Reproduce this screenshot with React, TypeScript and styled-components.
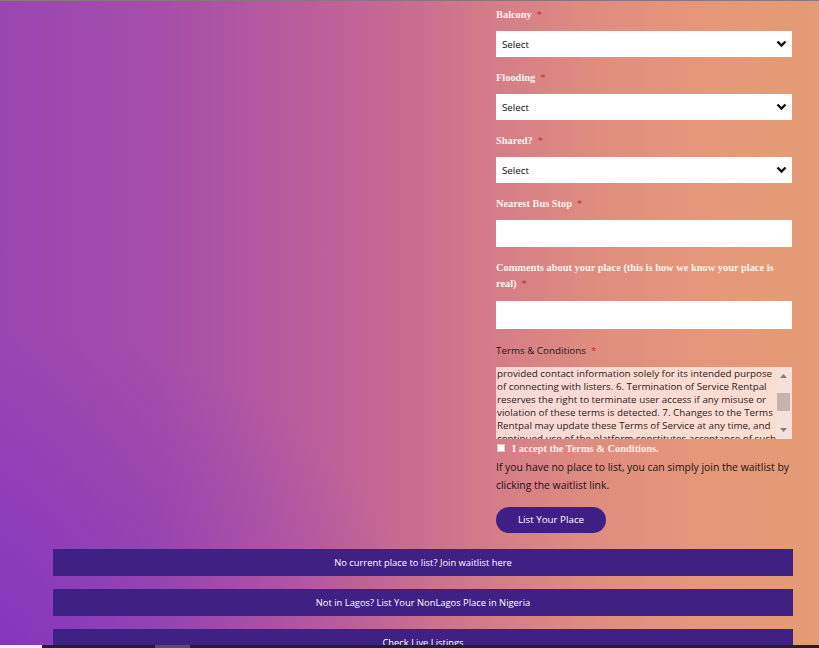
import React from "react";
import styled, { createGlobalStyle } from "styled-components";

const Global = createGlobalStyle`
  html, body { margin: 0; padding: 0; overflow: hidden; }
  body { font-family: "Open Sans", "Noto Sans", sans-serif; }
  * { box-sizing: border-box; }
`;

const Page = styled.div`
  width: 819px;
  height: 648px;
  display: flex;
  flex-direction: column;
  overflow: hidden;
  border-top: 1px solid #8c7480;
  background:
    radial-gradient(ellipse 420px 320px at 0% 100%, rgba(110, 40, 200, 0.5) 0%, rgba(110, 40, 200, 0) 100%),
    linear-gradient(90deg, #9a46b2 0%, #a64ea8 20%, #bc5e9c 38%, #c86c90 50%, #d47c88 60%, #df8c80 72%, #e6977a 86%, #e49c74 100%);
`;

const Main = styled.div`
  flex: 1;
  overflow: hidden;
  display: flex;
  flex-direction: column;
`;

const FormColumn = styled.form`
  margin-left: 496px;
  width: 296px;
  padding-top: 6px;
  display: flex;
  flex-direction: column;
`;

const Field = styled.div<{ $mb?: number }>`
  display: flex;
  flex-direction: column;
  margin-bottom: ${(p) => p.$mb ?? 13}px;
`;

const Label = styled.label<{ $dark?: boolean; $mb?: number }>`
  display: block;
  font-family: ${(p) => (p.$dark ? `"Open Sans", sans-serif` : `"Liberation Serif", serif`)};
  font-weight: ${(p) => (p.$dark ? 400 : 700)};
  font-size: ${(p) => (p.$dark ? "9.8px" : "10.4px")};
  line-height: 16px;
  color: ${(p) => (p.$dark ? "#1e1416" : "#fdf1ee")};
  margin-bottom: ${(p) => p.$mb ?? 8}px;
`;

const Req = styled.span`
  color: #c0302e;
  margin-left: 5px;
  font-weight: 400;
  line-height: 1;
`;

const SelectWrap = styled.div`
  position: relative;
  height: 26px;
  background: #ffffff;
  display: flex;
  align-items: center;
`;

const SelectBox = styled.select`
  appearance: none;
  -webkit-appearance: none;
  border: none;
  outline: none;
  background: transparent;
  width: 100%;
  height: 100%;
  padding: 0 24px 0 6px;
  font-family: "Open Sans", sans-serif;
  font-size: 9.8px;
  color: #0c0c0c;
`;

const Chevron = styled.svg`
  position: absolute;
  right: 5px;
  top: 8px;
  pointer-events: none;
`;

const TextInput = styled.input<{ $h: number }>`
  height: ${(p) => p.$h}px;
  border: none;
  outline: none;
  background: #ffffff;
  padding: 0 6px;
  font-family: "Open Sans", sans-serif;
  font-size: 10px;
`;

const TermsBox = styled.div`
  height: 72px;
  display: flex;
  background: rgba(255, 236, 228, 0.82);
`;

const TermsText = styled.div`
  flex: 1;
  overflow: hidden;
  padding: 0 0 0 1px;
  font-family: "Open Sans", sans-serif;
  font-size: 9.8px;
  line-height: 13px;
  color: #2a2020;
`;

const TermsLine = styled.div`
  white-space: nowrap;
`;

const ScrollTrack = styled.div`
  width: 16px;
  padding: 2px 2px 2px 1px;
  display: flex;
  flex-direction: column;
  align-items: center;
  background: rgba(245, 225, 218, 0.9);
`;

const ScrollArrow = styled.svg`
  flex: none;
  margin: 5px 0;
`;

const ScrollSpace = styled.div<{ $grow: number }>`
  flex: ${(p) => p.$grow};
`;

const ScrollThumb = styled.div`
  width: 13px;
  height: 18px;
  background: #c9b2aa;
`;

const AcceptRow = styled.label`
  display: flex;
  align-items: center;
  height: 18px;
  gap: 7px;
  font-family: "Liberation Serif", serif;
  font-weight: 700;
  font-size: 10.4px;
  color: #fdeee8;
`;

const Check = styled.span`
  width: 8px;
  height: 8px;
  margin-left: 1px;
  background: #ffffff;
  border: 1px solid #d8c8c4;
`;

const Note = styled.p`
  margin: 1px 0 12px;
  font-family: "Open Sans", sans-serif;
  font-size: 10.4px;
  line-height: 18px;
  color: #1c1214;
`;

const Pill = styled.button`
  width: 110px;
  height: 26px;
  border: none;
  border-radius: 13px;
  background: #3f1f86;
  color: #ffffff;
  font-family: "Open Sans", sans-serif;
  font-weight: 500;
  font-size: 9.8px;
  padding: 0;
`;

const LinkStack = styled.div`
  display: flex;
  flex-direction: column;
  gap: 13px;
  padding: 16px 26px 0 53px;
`;

const LinkBar = styled.a`
  height: 27px;
  display: flex;
  align-items: center;
  justify-content: center;
  background: #3f2083;
  color: #ffffff;
  font-family: "Open Sans", sans-serif;
  font-size: 9.4px;
  text-decoration: none;
  flex: none;
`;

const BottomBar = styled.div`
  height: 3px;
  display: flex;
  flex: none;
  background: #232126;
`;

const BarSeg = styled.div<{ $w: number; $c: string }>`
  width: ${(p) => p.$w}px;
  background: ${(p) => p.$c};
`;

const ChevronIcon = () => (
  <Chevron width="11" height="10" viewBox="0 0 11 10">
    <path d="M1.5 2.5 L5.5 6.5 L9.5 2.5" fill="none" stroke="#111" strokeWidth="2.4" />
  </Chevron>
);

const SelectField = ({ label }: { label: string }) => (
  <Field>
    <Label>
      {label}
      <Req>*</Req>
    </Label>
    <SelectWrap>
      <SelectBox defaultValue="">
        <option value="">Select</option>
        <option>Yes</option>
        <option>No</option>
      </SelectBox>
      <ChevronIcon />
    </SelectWrap>
  </Field>
);

const terms = [
  "provided contact information solely for its intended purpose",
  "of connecting with listers. 6. Termination of Service Rentpal",
  "reserves the right to terminate user access if any misuse or",
  "violation of these terms is detected. 7. Changes to the Terms",
  "Rentpal may update these Terms of Service at any time, and",
  "continued use of the platform constitutes acceptance of such",
];

export default function App() {
  return (
    <>
      <Global />
      <Page>
        <Main>
          <FormColumn onSubmit={(e) => e.preventDefault()}>
            <SelectField label="Balcony" />
            <SelectField label="Flooding" />
            <SelectField label="Shared?" />
            <Field>
              <Label>
                Nearest Bus Stop
                <Req>*</Req>
              </Label>
              <TextInput $h={27} />
            </Field>
            <Field $mb={14}>
              <Label $mb={9}>
                Comments about your place (this is how we know your place is real)
                <Req>*</Req>
              </Label>
              <TextInput $h={28} />
            </Field>
            <Label $dark>
              Terms &amp; Conditions
              <Req>*</Req>
            </Label>
            <TermsBox>
              <TermsText>
                {terms.map((t) => (
                  <TermsLine key={t}>{t}</TermsLine>
                ))}
              </TermsText>
              <ScrollTrack>
                <ScrollArrow width="7" height="4" viewBox="0 0 7 4">
                  <path d="M0 4 L3.5 0 L7 4 Z" fill="#8a7a76" />
                </ScrollArrow>
                <ScrollSpace $grow={1} />
                <ScrollThumb />
                <ScrollSpace $grow={1.1} />
                <ScrollArrow width="7" height="4" viewBox="0 0 7 4">
                  <path d="M0 0 L3.5 4 L7 0 Z" fill="#8a7a76" />
                </ScrollArrow>
              </ScrollTrack>
            </TermsBox>
            <AcceptRow>
              <Check />I accept the Terms &amp; Conditions.
            </AcceptRow>
            <Note>
              If you have no place to list, you can simply join the waitlist by clicking the waitlist link.
            </Note>
            <div>
              <Pill type="submit">List Your Place</Pill>
            </div>
          </FormColumn>
          <LinkStack>
            <LinkBar href="#">No current place to list? Join waitlist here</LinkBar>
            <LinkBar href="#">Not in Lagos? List Your NonLagos Place in Nigeria</LinkBar>
            <LinkBar href="#">Check Live Listings</LinkBar>
          </LinkStack>
        </Main>
        <BottomBar>
          <BarSeg $w={42} $c="#f2eef2" />
          <BarSeg $w={113} $c="#232126" />
          <BarSeg $w={35} $c="#55525a" />
        </BottomBar>
      </Page>
    </>
  );
}
